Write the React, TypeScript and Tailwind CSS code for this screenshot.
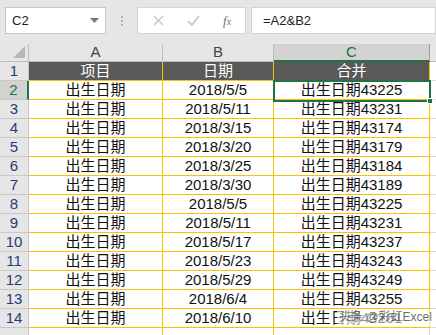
const ROWS: [string, string, string][] = [
  ["出生日期", "2018/5/5", "出生日期43225"],
  ["出生日期", "2018/5/11", "出生日期43231"],
  ["出生日期", "2018/3/15", "出生日期43174"],
  ["出生日期", "2018/3/20", "出生日期43179"],
  ["出生日期", "2018/3/25", "出生日期43184"],
  ["出生日期", "2018/3/30", "出生日期43189"],
  ["出生日期", "2018/5/5", "出生日期43225"],
  ["出生日期", "2018/5/11", "出生日期43231"],
  ["出生日期", "2018/5/17", "出生日期43237"],
  ["出生日期", "2018/5/23", "出生日期43243"],
  ["出生日期", "2018/5/29", "出生日期43249"],
  ["出生日期", "2018/6/4", "出生日期43255"],
  ["出生日期", "2018/6/10", "出生日期43261"],
];

const FONT = "font-['Liberation_Sans','Noto_Sans_CJK_SC',sans-serif]";

export default function App() {
  return (
    <div className={`relative h-[335px] w-[436px] overflow-hidden bg-[#e6e6e6] ${FONT}`}>
      {/* formula bar */}
      <div className="flex h-[44px] items-start pt-[7px] pl-[5px]">
        <div className="flex h-[27px] w-[101px] items-center justify-between border border-[#c6c6c6] bg-white pl-[6px] pr-[6px] text-[13px] text-[#222]">
          <span>C2</span>
          <svg width="9" height="5" viewBox="0 0 9 5"><path d="M0 0h9L4.5 5z" fill="#777" /></svg>
        </div>
        <div className="flex h-[27px] w-[31px] flex-col items-center justify-center gap-[2px]">
          <span className="h-[2px] w-[2px] bg-[#b0b0b0]" />
          <span className="h-[2px] w-[2px] bg-[#b0b0b0]" />
          <span className="h-[2px] w-[2px] bg-[#b0b0b0]" />
        </div>
        <div className="flex h-[27px] w-[109px] items-center border border-[#d4d4d4] bg-white">
          <svg className="ml-[15px]" width="11" height="11" viewBox="0 0 11 11"><path d="M1 1l9 9M10 1l-9 9" stroke="#c3c3c3" strokeWidth="1.3" /></svg>
          <svg className="ml-[23px]" width="13" height="11" viewBox="0 0 13 11"><path d="M1 6l4 4 7-9" stroke="#c3c3c3" strokeWidth="1.6" fill="none" /></svg>
          <span className="ml-[23px] font-['Liberation_Serif',serif] text-[13px] italic text-[#707070]">f<span className="text-[10px]">x</span></span>
        </div>
        <div className="ml-[5px] flex h-[27px] flex-1 items-center border border-[#d4d4d4] bg-white pl-[11px] text-[13px] text-[#222]">
          =A2&amp;B2
        </div>
      </div>

      {/* sheet */}
      <div className="grid grid-cols-[29px_134px_111px_156px_6px] grid-rows-[18px_repeat(15,19px)] text-[15px]">
        {/* column headers */}
        <div className="relative border-r border-b border-[#bdbdbd] bg-[#e6e6e6]">
          <svg className="absolute right-[3px] bottom-[3px]" width="12" height="12" viewBox="0 0 12 12"><path d="M12 0V12H0z" fill="#b8b8b8" /></svg>
        </div>
        <div className="flex items-center justify-center border-r border-b border-[#bdbdbd] text-[#444]">A</div>
        <div className="flex items-center justify-center border-r border-b border-[#bdbdbd] text-[#444]">B</div>
        <div className="flex items-center justify-center border-r border-[#9c9c9c] border-b-2 border-b-[#217346] bg-[#d2d2d2] text-[#217346]">C</div>
        <div className="border-b border-[#bdbdbd]" />

        {/* row 1 */}
        <div className="flex items-center justify-center border-r border-b border-[#c8c8c8] bg-[#e6e6e6] text-[#1f3d7a]">1</div>
        <div className="flex items-center justify-center border-r border-b border-[#ffc000] bg-[#595959] text-white">项目</div>
        <div className="flex items-center justify-center border-r border-b border-[#ffc000] bg-[#595959] text-white">日期</div>
        <div className="flex items-center justify-center border-r border-b border-[#ffc000] bg-[#595959] text-white">合并</div>
        <div className="border-b border-[#dadada] bg-white" />

        {ROWS.map((r, i) => (
          <Row key={i} n={i + 2} cells={r} />
        ))}

        {/* top edge of row 15 */}
        <div className="border-r border-[#c8c8c8] bg-[#e6e6e6]" />
        <div className="border-r border-[#ffc000] bg-white" />
        <div className="border-r border-[#ffc000] bg-white" />
        <div className="border-r border-[#dadada] bg-white" />
        <div className="bg-white" />
      </div>

      {/* selection on C2 */}
      <div className="absolute left-[273px] top-[80px] h-[22px] w-[158px] border-2 border-[#217346]">
        <div className="absolute -right-[4px] -bottom-[4px] h-[6px] w-[6px] border border-white bg-[#217346]" />
      </div>

      {/* watermark */}
      <div className="absolute left-[337px] top-[309px] whitespace-nowrap bg-white/55 px-[2px] text-[12px] leading-[17px] text-[#444]/80">
        头条 @彩虹Excel
      </div>
    </div>
  );
}

function Row({ n, cells }: { n: number; cells: [string, string, string] }) {
  const sel = n === 2;
  return (
    <>
      <div
        className={`flex items-center justify-center border-b border-[#c8c8c8] ${
          sel ? "border-r-2 border-r-[#217346] bg-[#d2d2d2] text-[#217346]" : "border-r bg-[#e6e6e6] text-[#1f3d7a]"
        }`}
      >
        {n}
      </div>
      <div className="flex items-center justify-center border-r border-b border-[#ffc000] bg-white text-[#111]">{cells[0]}</div>
      <div className="flex items-center justify-center border-r border-b border-[#ffc000] bg-white text-[#111]">{cells[1]}</div>
      <div className="flex items-center justify-center border-r border-b border-[#ffc000] bg-white text-[#111]">{cells[2]}</div>
      <div className="border-b border-[#dadada] bg-white" />
    </>
  );
}
